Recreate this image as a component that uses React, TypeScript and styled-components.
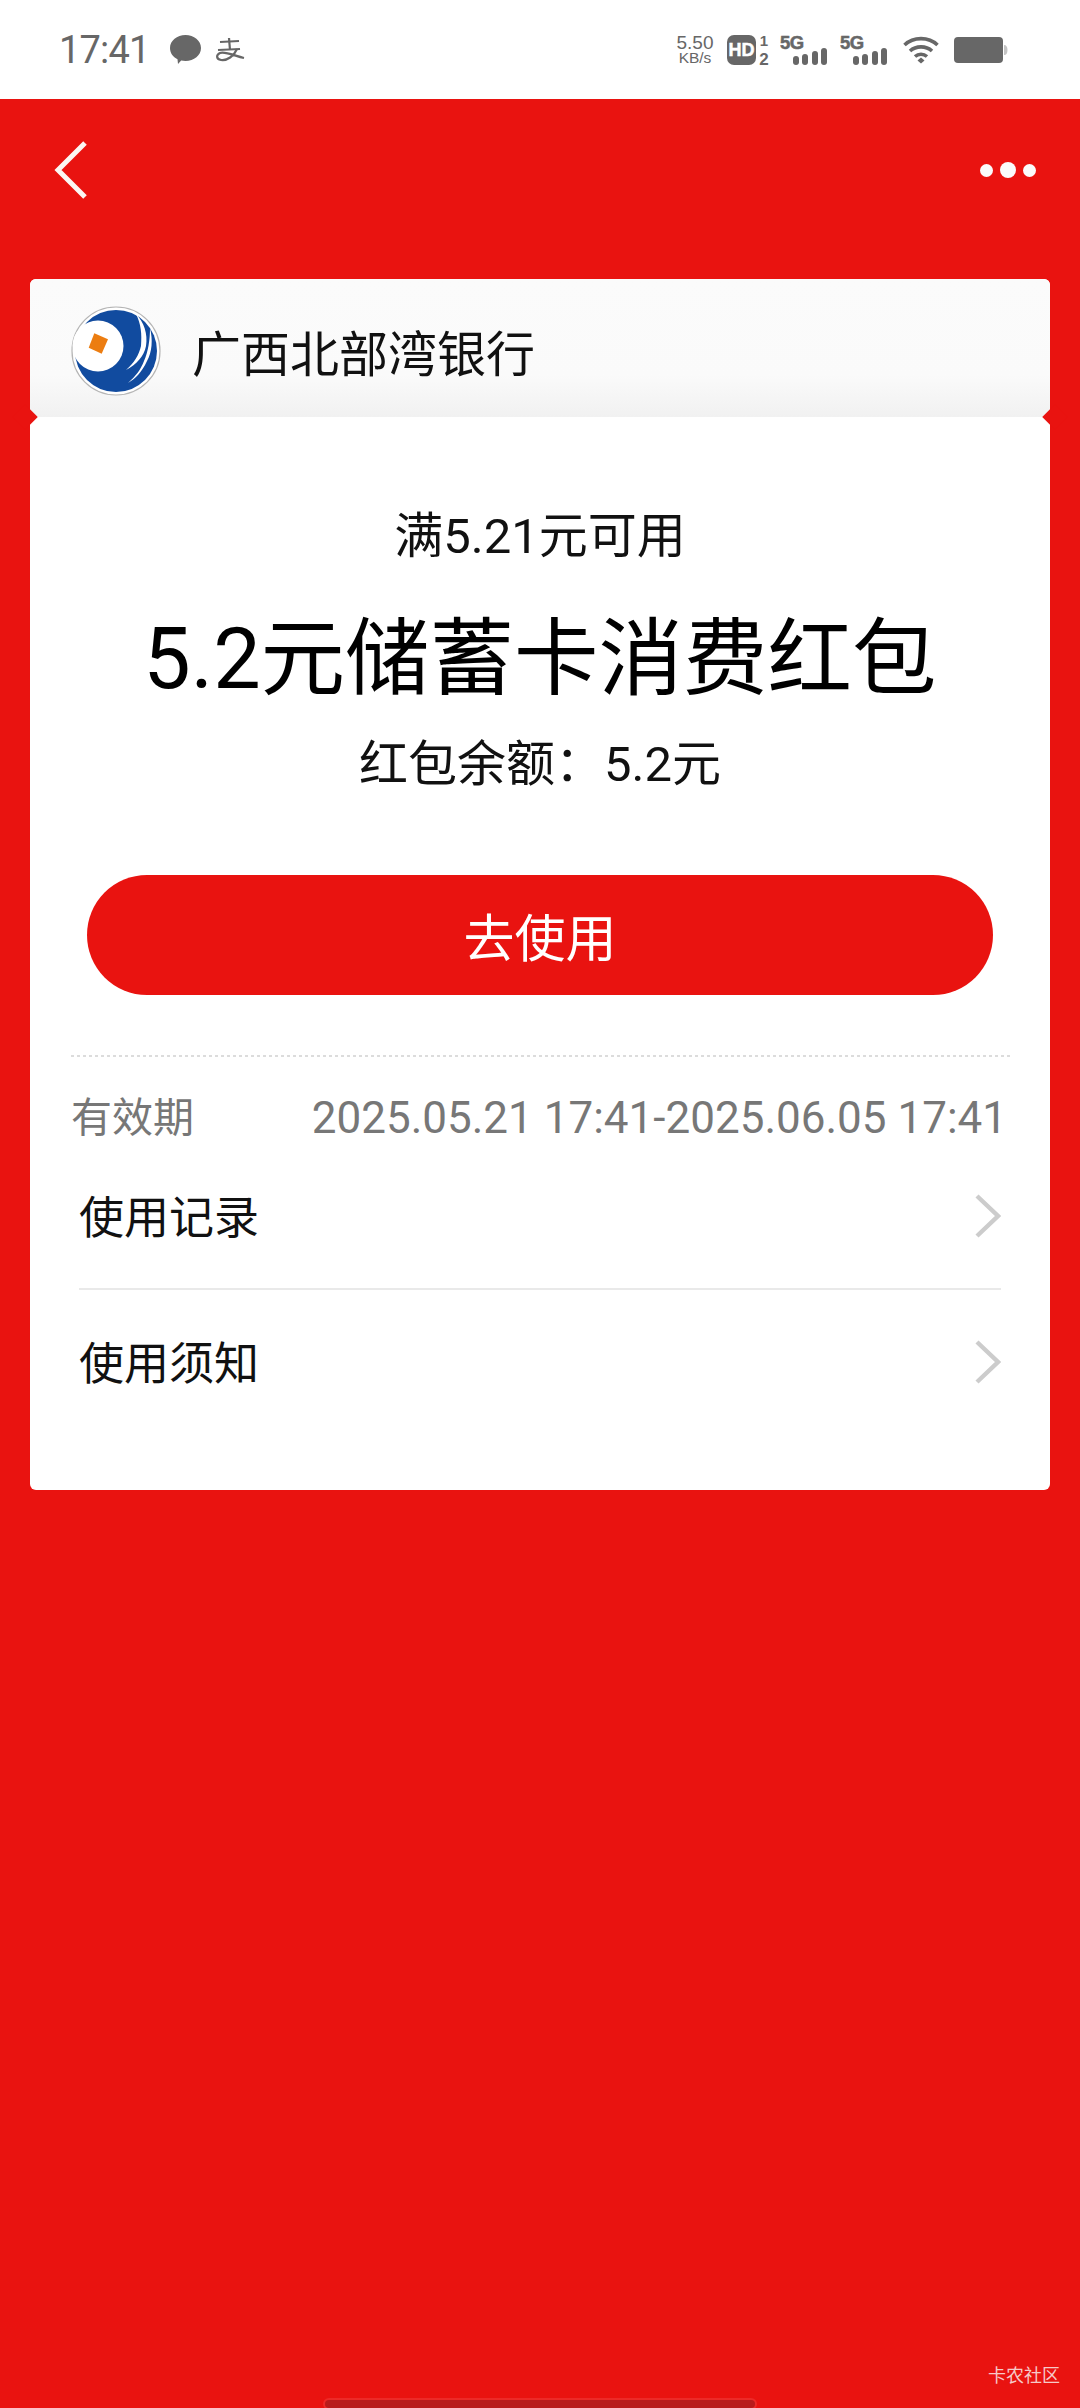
import styled, { createGlobalStyle } from 'styled-components'

const red = '#e91310'
const statusGrey = '#676767'

const GlobalStyle = createGlobalStyle`
    html, body {
        margin: 0;
        padding: 0;
        background: ${red};
    }
    * {
        box-sizing: border-box;
    }
`
const Page = styled.div`
    position: relative;
    width: 1080px;
    height: 2408px;
    overflow: hidden;
    display: flex;
    flex-direction: column;
    background: ${red};
    font-family: Roboto, "Noto Sans CJK SC", sans-serif;
    color: #000;
`
const StatusBar = styled.div`
    display: flex;
    align-items: center;
    height: 99px;
    padding: 0 72px 0 59px;
    background: #fff;
    color: ${statusGrey};
`
const Clock = styled.div`
    font-size: 38px;
    line-height: 48px;
    letter-spacing: -0.8px;
`
const NotifyIcons = styled.div`
    display: flex;
    align-items: center;
    gap: 14px;
    margin-left: 20px;
    flex: 1;
`
const SystemIcons = styled.div`
    display: flex;
    align-items: center;
`
const IconSlot = styled.div<{ $gap: number }>`
    display: flex;
    margin-left: ${({ $gap }) => $gap}px;
`
const Speed = styled.div`
    display: flex;
    flex-direction: column;
    align-items: center;
    width: 38px;
    margin-right: 13px;
    font-family: "Liberation Sans", sans-serif;
`
const SpeedValue = styled.span`
    font-size: 19px;
    line-height: 17px;
`
const SpeedUnit = styled.span`
    font-size: 15.5px;
    line-height: 14px;
`
const NavBar = styled.div`
    display: flex;
    align-items: center;
    justify-content: space-between;
    height: 180px;
    padding: 0 44px 38px 52px;
    flex-shrink: 0;
`
const Dots = styled.div`
    display: flex;
    align-items: center;
    gap: 7px;
`
const Dot = styled.span<{ $big?: boolean }>`
    width: ${({ $big }) => ($big ? 16 : 13)}px;
    height: ${({ $big }) => ($big ? 16 : 13)}px;
    border-radius: 50%;
    background: #fbfbfb;
`
const Card = styled.div`
    margin: 0 30px;
    height: 1211px;
    display: flex;
    flex-direction: column;
    background: #fff;
    border-radius: 6px;
    flex-shrink: 0;
`
const BankHeader = styled.div`
    position: relative;
    display: flex;
    align-items: center;
    gap: 31px;
    height: 138px;
    padding: 6px 0 0 41px;
    border-radius: 6px 6px 0 0;
    background: linear-gradient(#fbfbfb 0%, #fafafa 70%, #f1f1f1 100%);

    &::before,
    &::after {
        content: '';
        position: absolute;
        bottom: -9px;
        width: 18px;
        height: 18px;
        background: ${red};
        transform: rotate(45deg);
    }
    &::before {
        left: -14px;
    }
    &::after {
        right: -14px;
    }
`
const BankName = styled.div`
    font-family: "Noto Sans CJK SC", sans-serif;
    font-size: 49px;
    line-height: 60px;
    color: #111;
`
const Summary = styled.div`
    display: flex;
    flex-direction: column;
    align-items: center;
    padding: 88px 57px 0;
`
const Threshold = styled.div`
    font-size: 49px;
    line-height: 64px;
    color: #111;
`
const CouponTitle = styled.div`
    margin-top: 41px;
    font-size: 84.5px;
    line-height: 100px;
    white-space: nowrap;
`
const Balance = styled.div`
    margin-top: 23px;
    font-size: 49px;
    line-height: 64px;
    color: #111;
`
const UseButton = styled.div`
    display: flex;
    align-items: center;
    justify-content: center;
    width: 906px;
    height: 120px;
    margin-top: 78px;
    border-radius: 60px;
    background: ${red};
    color: #fff;
    font-size: 51px;
`
const DashedLine = styled.div`
    height: 2px;
    margin: 60px 40px 0 41px;
    background-image: linear-gradient(to right, #dcdcdc 50%, transparent 50%);
    background-size: 6px 2px;
`
const Validity = styled.div`
    display: flex;
    align-items: center;
    justify-content: space-between;
    height: 52px;
    margin: 35px 43px 0 41px;
    color: #777;
    white-space: nowrap;
`
const ValidityLabel = styled.span`
    font-size: 41px;
    line-height: 46px;
    margin-bottom: 1px;
`
const ValidityDates = styled.span`
    font-size: 44px;
    line-height: 52px;
`
const LinkRow = styled.div<{ $divider?: boolean }>`
    display: flex;
    align-items: center;
    justify-content: space-between;
    height: ${({ $divider }) => ($divider ? 146 : 144)}px;
    margin: 0 49px;
    font-size: 45px;
    color: #111;
    border-bottom: ${({ $divider }) => ($divider ? '2px solid #e9e9e9' : 'none')};
`
const LinkLabel = styled.span`
    margin-bottom: 3px;
`
const Watermark = styled.div`
    position: absolute;
    right: 20px;
    bottom: 20px;
    font-size: 18px;
    line-height: 24px;
    color: #f6c9c8;
`
const HomeBar = styled.div`
    position: absolute;
    left: 325px;
    bottom: 0;
    width: 430px;
    height: 8px;
    border-radius: 4px;
    background: #b81c1c;
    box-shadow: 0 0 0 2px #ec2a28;
`

function BackIcon() {
    return (
        <svg width="36" height="58" viewBox="0 0 36 58">
            <path d="M33 2 L6 29 L33 56" fill="none" stroke="#fbf6f3" strokeWidth="5" />
        </svg>
    )
}
function Chevron() {
    return (
        <svg width="26" height="44" viewBox="0 0 26 44">
            <path d="M2 2 L23 22 L2 42" fill="none" stroke="#cccccc" strokeWidth="4.4" />
        </svg>
    )
}
function ChatIcon() {
    return (
        <svg width="31" height="30" viewBox="0 0 31 30">
            <path
                d="M15.5 0 C24 0 31 5.6 31 13 C31 20.4 24 26 15.5 26 C14 26 12.5 25.8 11.2 25.5 L8 29 L7.5 24.2 C3 22 0 18 0 13 C0 5.6 7 0 15.5 0 Z"
                fill={statusGrey}
            />
        </svg>
    )
}
// alipay notification mark
function AlipayIcon() {
    return (
        <svg width="30" height="26" viewBox="0 0 30 26">
            <g fill="none" stroke={statusGrey} strokeWidth="2.2">
                <path d="M5 5 L24 4" />
                <path d="M14 1 L15 13" />
                <path d="M3 13 L25 12" />
                <path d="M22 12 C19 19 12 24 6 23 C1 22 1 18 5 16 C10 14 20 19 29 21" />
            </g>
        </svg>
    )
}
function HdIcon() {
    return (
        <svg width="44" height="40" viewBox="0 -4 44 40">
            <rect x="0" y="1" width="29" height="30" rx="7" fill={statusGrey} />
            <text x="14.5" y="22" textAnchor="middle" fontFamily="Liberation Sans" fontWeight="700" fontSize="18" stroke="#fff" strokeWidth="0.5" fill="#fff">HD</text>
            <text x="37" y="12" textAnchor="middle" fontFamily="Liberation Sans" fontWeight="700" fontSize="15" fill={statusGrey}>1</text>
            <text x="37" y="31" textAnchor="middle" fontFamily="Liberation Sans" fontWeight="700" fontSize="17" fill={statusGrey}>2</text>
        </svg>
    )
}
function SignalIcon() {
    return (
        <svg width="48" height="40" viewBox="0 -4 48 40">
            <text x="0" y="15" fontFamily="Liberation Sans" fontWeight="700" fontSize="18.5" letterSpacing="-0.5" stroke={statusGrey} strokeWidth="0.5" fill={statusGrey}>5G</text>
            <rect x="13" y="22" width="6" height="9" rx="3" fill={statusGrey} />
            <rect x="22" y="20" width="6" height="11" rx="3" fill={statusGrey} />
            <rect x="32" y="17" width="6" height="14" rx="3" fill={statusGrey} />
            <rect x="41" y="14" width="6" height="17" rx="3" fill={statusGrey} />
        </svg>
    )
}
function WifiIcon() {
    return (
        <svg width="36" height="28" viewBox="0 0 36 28">
            <g fill="none" stroke={statusGrey} strokeWidth="3.6">
                <path d="M1.5 9 C10.5 0.5 25.5 0.5 34.5 9" />
                <path d="M7 15 C13 9.5 23 9.5 29 15" />
                <path d="M12 20.5 C15.5 17.5 20.5 17.5 24 20.5" />
            </g>
            <path d="M14.5 24.5 L18 21.5 L21.5 24.5 L18 27.5 Z" fill={statusGrey} />
        </svg>
    )
}
function BatteryIcon() {
    return (
        <svg width="54" height="28" viewBox="0 0 54 28">
            <rect x="0" y="1" width="49" height="26" rx="4" fill={statusGrey} />
            <path d="M50 9 C52.5 9 53.5 11 53.5 14 C53.5 17 52.5 19 50 19 Z" fill="#c4c4c4" />
        </svg>
    )
}
function BankLogo() {
    return (
        <svg width="90" height="90" viewBox="0 0 90 90">
            <circle cx="45" cy="45" r="44" fill="#fff" stroke="#b5b5b5" strokeWidth="1.2" />
            <circle cx="45" cy="45" r="41" fill="#114b9f" />
            <circle cx="27" cy="40" r="25.5" fill="#fff" />
            <path d="M65 8 C73 16 77 28 75 40 C73 50 66 58 55 64 C63 57 68 49 70 40 C71 28 70 18 65 8 Z" fill="#fff" />
            <path d="M79 22 C82 34 81 46 76 55 C71 66 64 73 57 77 C65 70 70 63 73 55 C77 46 79 34 79 22 Z" fill="#fff" />
            <path d="M23.3 27.3 L37 33.3 L30.7 47.7 L17.7 41.7 Z" fill="#ec7d11" />
        </svg>
    )
}

export default function App() {
    return (
        <Page>
            <GlobalStyle />
            <StatusBar>
                <Clock>17:41</Clock>
                <NotifyIcons>
                    <ChatIcon />
                    <AlipayIcon />
                </NotifyIcons>
                <SystemIcons>
                    <Speed>
                        <SpeedValue>5.50</SpeedValue>
                        <SpeedUnit>KB/s</SpeedUnit>
                    </Speed>
                    <HdIcon />
                    <IconSlot $gap={9}><SignalIcon /></IconSlot>
                    <IconSlot $gap={12}><SignalIcon /></IconSlot>
                    <IconSlot $gap={15}><WifiIcon /></IconSlot>
                    <IconSlot $gap={15}><BatteryIcon /></IconSlot>
                </SystemIcons>
            </StatusBar>
            <NavBar>
                <BackIcon />
                <Dots>
                    <Dot />
                    <Dot $big />
                    <Dot />
                </Dots>
            </NavBar>
            <Card>
                <BankHeader>
                    <BankLogo />
                    <BankName>广西北部湾银行</BankName>
                </BankHeader>
                <Summary>
                    <Threshold>满5.21元可用</Threshold>
                    <CouponTitle>5.2元储蓄卡消费红包</CouponTitle>
                    <Balance>红包余额：5.2元</Balance>
                    <UseButton>去使用</UseButton>
                </Summary>
                <DashedLine />
                <Validity>
                    <ValidityLabel>有效期</ValidityLabel>
                    <ValidityDates>2025.05.21 17:41-2025.06.05 17:41</ValidityDates>
                </Validity>
                <LinkRow $divider>
                    <LinkLabel>使用记录</LinkLabel>
                    <Chevron />
                </LinkRow>
                <LinkRow>
                    <LinkLabel>使用须知</LinkLabel>
                    <Chevron />
                </LinkRow>
            </Card>
            <Watermark>卡农社区</Watermark>
            <HomeBar />
        </Page>
    )
}
